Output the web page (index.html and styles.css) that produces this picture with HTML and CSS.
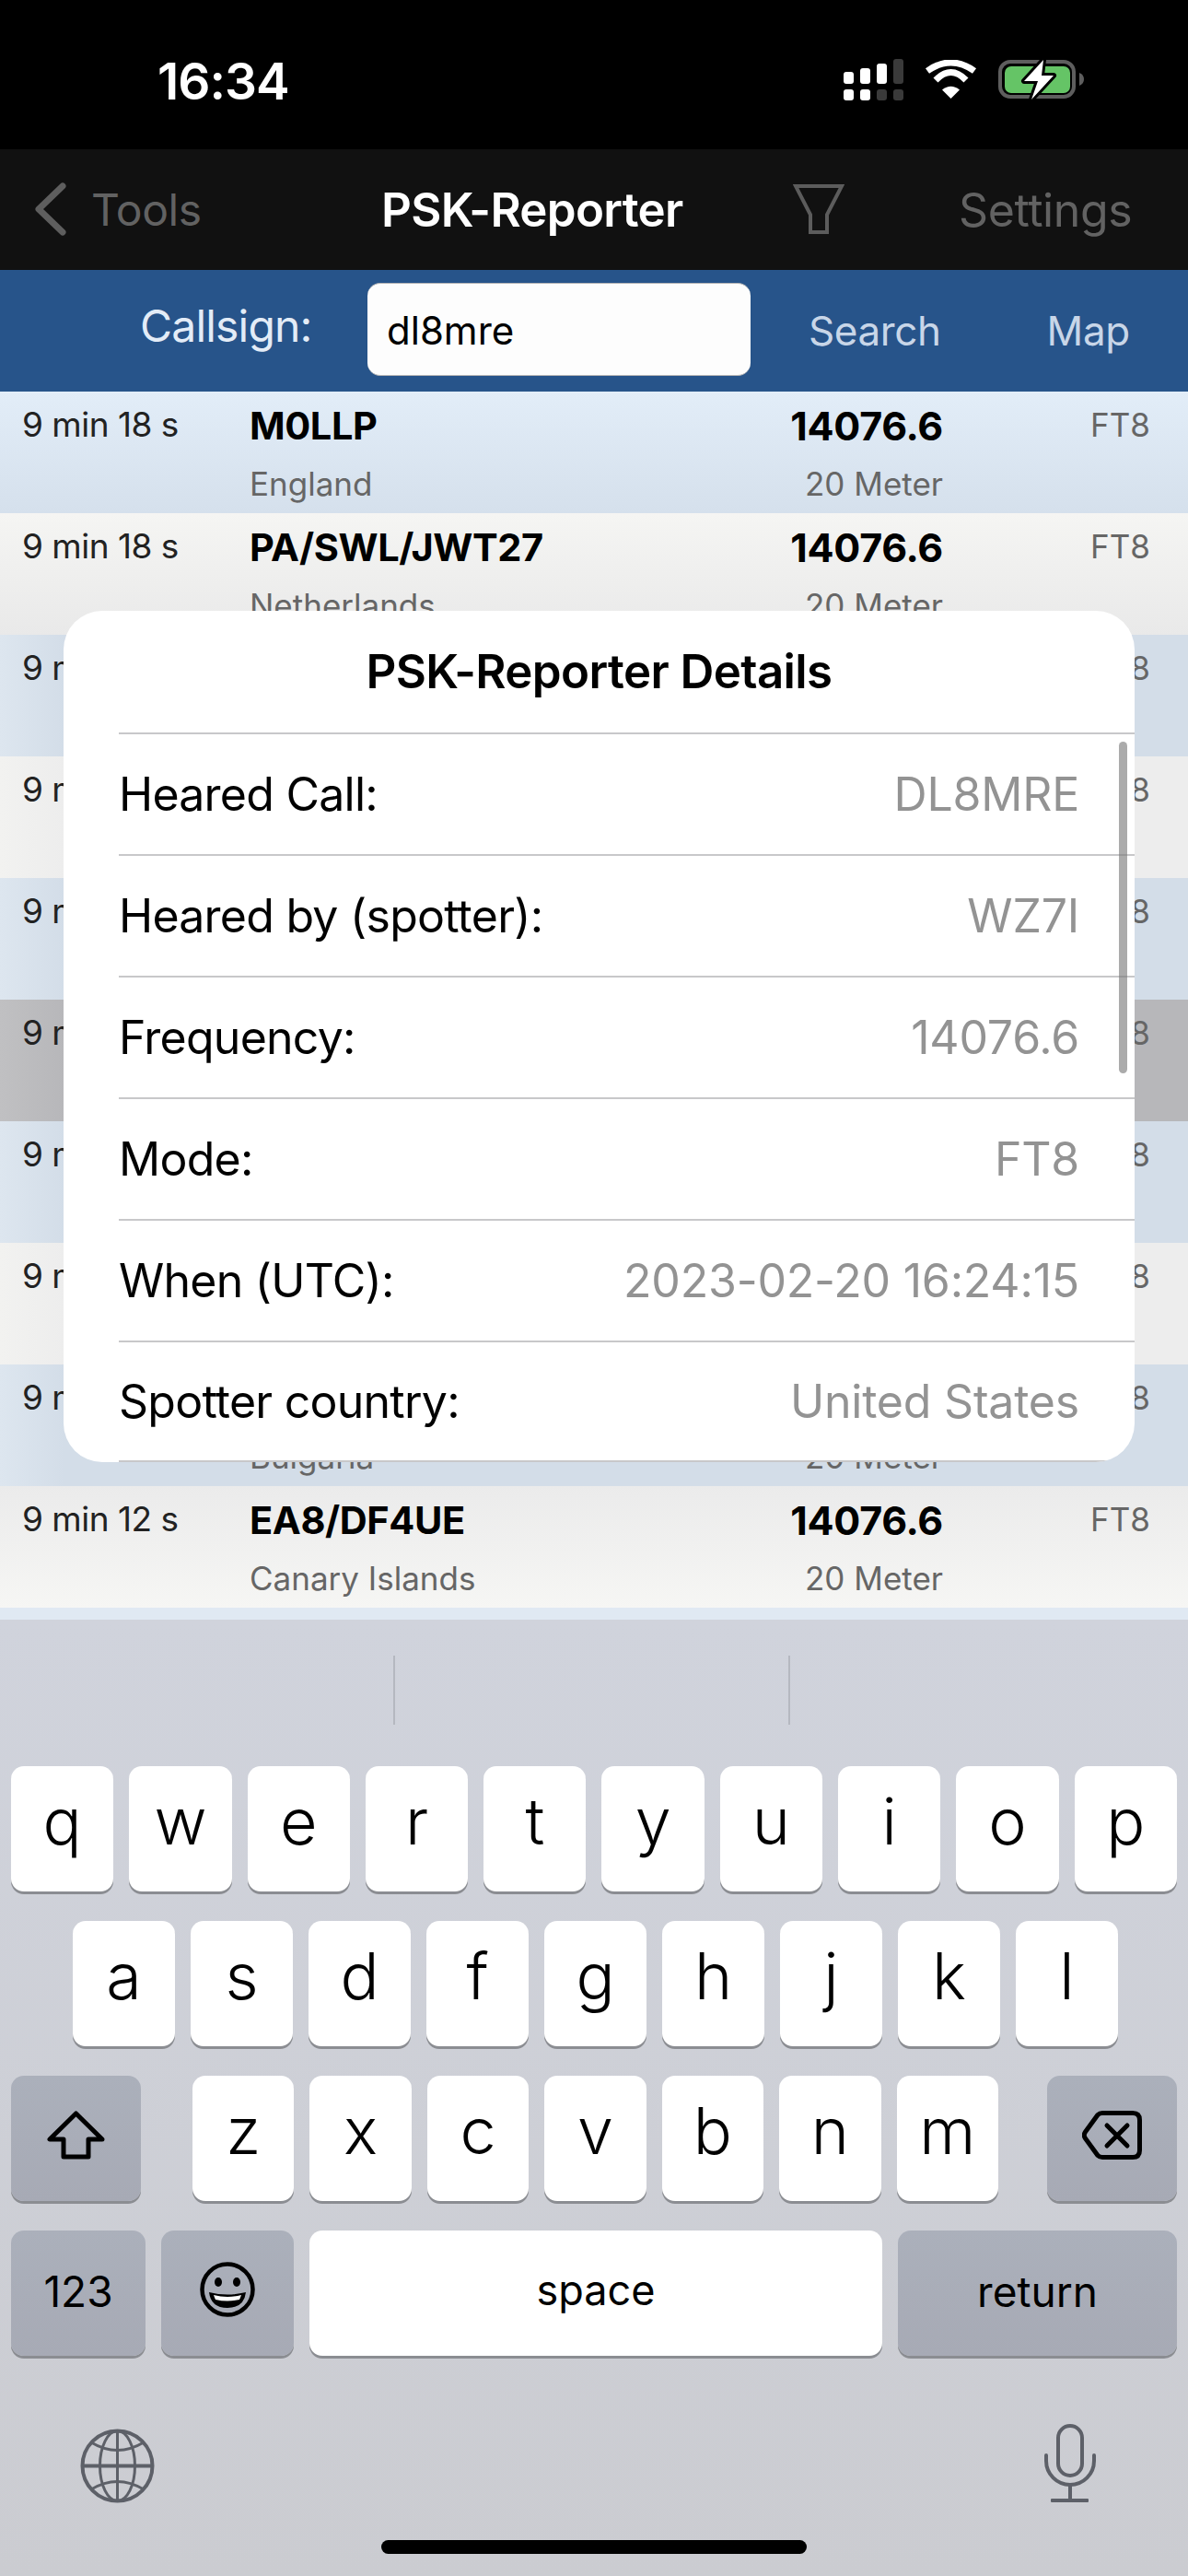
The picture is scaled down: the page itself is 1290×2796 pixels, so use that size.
FILE: index.html
```html
<!DOCTYPE html>
<html lang="en">

<head>
  <meta charset="UTF-8">
  <meta name="viewport" content="width=device-width, initial-scale=1.0">
  <title>PSK-Reporter</title>
  <link rel="stylesheet" href="styles.css">
</head>

<body>
  <div class="status-bar">
    <span class="clock">16:34</span>
    <div class="status-icons">
      <svg class="signal" viewBox="0 0 65 45">
        <rect x="0" y="14" width="11" height="13" rx="3" fill="#fff" />
        <rect x="18" y="10" width="11" height="17" rx="3" fill="#fff" />
        <rect x="36" y="5" width="11" height="22" rx="3" fill="#fff" />
        <rect x="54" y="0" width="11" height="27" rx="3" fill="#3a3a3a" />
        <rect x="0" y="33" width="11" height="12" rx="3" fill="#fff" />
        <rect x="18" y="33" width="11" height="12" rx="3" fill="#fff" />
        <rect x="36" y="33" width="11" height="12" rx="3" fill="#3a3a3a" />
        <rect x="54" y="33" width="11" height="12" rx="3" fill="#3a3a3a" />
      </svg>
      <svg class="wifi" viewBox="0 0 57 42">
        <path d="M3 12 Q28.5 -6 54 12" fill="none" stroke="#fff" stroke-width="7" />
        <path d="M12 22 Q28.5 5 45 22" fill="none" stroke="#fff" stroke-width="7" />
        <path d="M28.5 42 L19 32.5 Q28.5 25 38 32.5 Z" fill="#fff" />
      </svg>
      <svg class="battery" viewBox="0 0 100 50">
        <rect x="6" y="5" width="80" height="38" rx="11" fill="none" stroke="#5e5e5e" stroke-width="4" />
        <rect x="11" y="10" width="71" height="29" rx="7" fill="#65c466" />
        <path d="M92 17 Q97 19 97 24 Q97 29 92 31 Z" fill="#5e5e5e" />
        <path d="M53 3 L32 26 H47 L40 46 L64 20 H51 Z" fill="#fff" stroke="#000" stroke-width="6" paint-order="stroke" stroke-linejoin="round" />
      </svg>
    </div>
  </div>

  <div class="nav-bar">
    <svg class="nav-back" viewBox="0 0 34 58">
      <path d="M30 4 L4 29 L30 54" fill="none" stroke="#5e5e5e" stroke-width="7" stroke-linecap="round" stroke-linejoin="round" />
    </svg>
    <span class="nav-link nav-tools">Tools</span>
    <span class="nav-title">PSK-Reporter</span>
    <svg class="nav-filter" viewBox="0 0 56 55">
      <path d="M3 2 H53 L37 33 V52 H19 V33 Z" fill="none" stroke="#5c5c5c" stroke-width="4" />
    </svg>
    <span class="nav-link nav-settings">Settings</span>
  </div>

  <div class="search-bar">
    <label class="search-label" for="callsign">Callsign:</label>
    <input class="search-input" id="callsign" type="text" value="dl8mre">
    <span class="search-action search-go">Search</span>
    <span class="search-action search-map">Map</span>
  </div>

  <div class="spots">
    <div class="spot spot-first">
      <span class="spot-age">9 min 18 s</span>
      <span class="spot-call">M0LLP</span>
      <span class="spot-freq">14076.6</span>
      <span class="spot-mode">FT8</span>
      <span class="spot-country">England</span>
      <span class="spot-band">20 Meter</span>
    </div>
    <div class="spot spot-second">
      <span class="spot-age">9 min 18 s</span>
      <span class="spot-call">PA/SWL/JWT27</span>
      <span class="spot-freq">14076.6</span>
      <span class="spot-mode">FT8</span>
      <span class="spot-country">Netherlands</span>
      <span class="spot-band">20 Meter</span>
    </div>
    <div class="spot spot-blue">
      <span class="spot-age">9 min</span>
      <span class="spot-mode">FT8</span>
    </div>
    <div class="spot spot-grey">
      <span class="spot-age">9 min</span>
      <span class="spot-mode">FT8</span>
    </div>
    <div class="spot spot-blue">
      <span class="spot-age">9 min</span>
      <span class="spot-mode">FT8</span>
    </div>
    <div class="spot spot-selected">
      <span class="spot-age">9 min</span>
      <span class="spot-mode">FT8</span>
    </div>
    <div class="spot spot-blue">
      <span class="spot-age">9 min</span>
      <span class="spot-mode">FT8</span>
    </div>
    <div class="spot spot-grey">
      <span class="spot-age">9 min</span>
      <span class="spot-mode">FT8</span>
    </div>
    <div class="spot spot-blue">
      <span class="spot-age">9 min</span>
      <span class="spot-mode">FT8</span>
      <span class="spot-country">Bulgaria</span>
      <span class="spot-band">20 Meter</span>
    </div>
    <div class="spot spot-last">
      <span class="spot-age">9 min 12 s</span>
      <span class="spot-call">EA8/DF4UE</span>
      <span class="spot-freq">14076.6</span>
      <span class="spot-mode">FT8</span>
      <span class="spot-country">Canary Islands</span>
      <span class="spot-band">20 Meter</span>
    </div>

    <div class="dialog">
      <div class="dialog-title">PSK-Reporter Details</div>
      <div class="detail-row"><span>Heared Call:</span><span class="detail-value">DL8MRE</span></div>
      <div class="detail-row"><span>Heared by (spotter):</span><span class="detail-value">WZ7I</span></div>
      <div class="detail-row"><span>Frequency:</span><span class="detail-value">14076.6</span></div>
      <div class="detail-row"><span>Mode:</span><span class="detail-value">FT8</span></div>
      <div class="detail-row"><span>When (UTC):</span><span class="detail-value">2023-02-20 16:24:15</span></div>
      <div class="detail-row detail-last"><span>Spotter country:</span><span class="detail-value">United States</span></div>
      <div class="dialog-scroll"></div>
    </div>
  </div>

  <div class="keyboard">
    <div class="suggestions">
      <span class="suggestion-sep"></span>
      <span class="suggestion-sep"></span>
    </div>

    <div class="key-rows">
      <div class="key-row row-top">
        <span class="key">q</span><span class="key">w</span><span class="key">e</span><span class="key">r</span><span class="key">t</span>
        <span class="key">y</span><span class="key">u</span><span class="key">i</span><span class="key">o</span><span class="key">p</span>
      </div>
      <div class="key-row row-middle">
        <span class="key">a</span><span class="key">s</span><span class="key">d</span><span class="key">f</span><span class="key">g</span>
        <span class="key">h</span><span class="key">j</span><span class="key">k</span><span class="key">l</span>
      </div>
      <div class="key-row row-lower">
        <span class="key key-fn key-shift">
          <svg class="key-icon" width="63" height="53" viewBox="0 0 63 53">
            <path d="M31.5 3 L3 31 H18 V50 H45 V31 H60 Z" fill="none" stroke="#000" stroke-width="5" stroke-linejoin="round" />
          </svg>
        </span>
        <div class="letters">
          <span class="key">z</span><span class="key">x</span><span class="key">c</span><span class="key">v</span>
          <span class="key">b</span><span class="key">n</span><span class="key">m</span>
        </div>
        <span class="key key-fn key-delete">
          <svg class="key-icon" width="65" height="53" viewBox="0 0 65 53">
            <path d="M22 2.5 H55 Q62.5 2.5 62.5 10 V43 Q62.5 50.5 55 50.5 H22 Q19 50.5 17 48.5 L3.5 30 Q1 26.5 3.5 23 L17 4.5 Q19 2.5 22 2.5 Z" fill="none" stroke="#000" stroke-width="5" />
            <path d="M27 16 L49 38 M49 16 L27 38" fill="none" stroke="#000" stroke-width="5" stroke-linecap="round" />
          </svg>
        </span>
      </div>
      <div class="key-row row-bottom">
        <span class="key key-fn key-small key-num">123</span>
        <span class="key key-fn key-emoji">
          <svg class="key-icon" width="60" height="60" viewBox="0 0 60 60">
            <circle cx="30" cy="30" r="27.5" fill="none" stroke="#000" stroke-width="4.5" />
            <ellipse cx="20" cy="22" rx="4" ry="5" fill="#000" />
            <ellipse cx="40" cy="22" rx="4" ry="5" fill="#000" />
            <path d="M10 33 Q30 38 50 33 Q48 50 30 50 Q12 50 10 33 Z" fill="#000" />
            <path d="M15 36 Q30 40 45 36 Q44 39 43 41 Q30 44 17 41 Q16 39 15 36 Z" fill="#fff" />
          </svg>
        </span>
        <span class="key key-small key-space">space</span>
        <span class="key key-fn key-small key-return">return</span>
      </div>
    </div>

    <div class="keyboard-tools">
      <svg class="globe" viewBox="0 0 81 81">
        <g fill="none" stroke="#5d6068">
          <circle cx="40.5" cy="40.5" r="38" stroke-width="4" />
          <ellipse cx="40.5" cy="40.5" rx="19" ry="38" stroke-width="3" />
          <path d="M40.5 2 V79" stroke-width="3" />
          <path d="M2 40.5 H79" stroke-width="4" />
          <path d="M12 15 Q40.5 32 69 15 M12 66 Q40.5 49 69 66" stroke-width="3" />
        </g>
      </svg>
      <svg class="mic" viewBox="0 0 56 85">
        <g fill="none" stroke="#5d6068" stroke-width="4">
          <rect x="15" y="2" width="26" height="54" rx="13" />
          <path d="M2 34 V40 A26 26 0 0 0 54 40 V34" stroke-linecap="round" />
          <path d="M28 66 V82" />
        </g>
        <rect x="7" y="81" width="41" height="4" rx="1" fill="#5d6068" />
      </svg>
    </div>

    <div class="home-bar"></div>
  </div>
</body>

</html>
```

FILE: styles.css
```css
* {
  box-sizing: border-box;
}

body {
  margin: 0;
  width: 1290px;
  height: 2796px;
  overflow: hidden;
  font-family: Inter, "Liberation Sans", sans-serif;
  background-color: #000;
}

/* status bar */
.status-bar {
  height: 162px;
  background-color: #000;
  position: relative;
}

.clock {
  position: absolute;
  left: 171px;
  top: 58px;
  font-size: 55px;
  line-height: 60px;
  font-weight: 600;
  color: #fff;
  letter-spacing: -1px;
}

.status-icons {
  display: flex;
  align-items: flex-start;
  padding: 62px 0 0 916px;
}

.signal {
  width: 65px;
  height: 45px;
  margin-top: 2px;
}

.wifi {
  width: 57px;
  height: 42px;
  margin: 3px 0 0 23px;
}

.battery {
  width: 100px;
  height: 50px;
  margin-left: 19px;
}

/* nav bar */
.nav-bar {
  height: 131px;
  background-color: #111;
  display: flex;
  align-items: center;
  padding-left: 38px;
  font-size: 48px;
}

.nav-back {
  width: 34px;
  height: 58px;
  margin-top: -1px;
}

.nav-link {
  color: #626262;
  letter-spacing: -0.4px;
}

.nav-tools {
  margin-left: 27px;
  width: 315px;
}

.nav-title {
  width: 447px;
  font-size: 51px;
  color: #fff;
  font-weight: 600;
  letter-spacing: -0.7px;
}

.nav-filter {
  width: 56px;
  height: 55px;
}

.nav-settings {
  margin-left: 124px;
  font-size: 50px;
}

/* search bar */
.search-bar {
  height: 132px;
  background-color: #27548a;
  display: flex;
  align-items: center;
  padding-left: 152px;
}

.search-label {
  width: 247px;
  font-size: 48px;
  color: #e3ecf7;
  letter-spacing: -0.8px;
  margin-top: -12px;
}

.search-input {
  width: 416px;
  height: 101px;
  padding: 2px 0 0 21px;
  border: none;
  border-top: 1px solid #b5b5b5;
  border-bottom: 1px solid #b5b5b5;
  border-radius: 14px;
  background-color: #fdfdfd;
  font-family: inherit;
  font-size: 42px;
  color: #000;
  margin-top: -4px;
}

.search-action {
  font-size: 44px;
  color: #c8d6e8;
  letter-spacing: -0.4px;
}

.search-go {
  margin-left: 63px;
}

.search-map {
  margin-left: 115px;
}

/* spot list */
.spots {
  height: 1333px;
  background-color: #e0e9f3;
  position: relative;
  overflow: hidden;
}

.spot {
  height: 132px;
  display: grid;
  grid-template-columns: 247px 1fr auto 225px;
  grid-template-rows: 66px 66px;
  padding: 0 41px 0 24px;
  color: #222;
}

.spot-first {
  background: linear-gradient(#e2edf8, #d5e0ec);
}

.spot-second {
  background: linear-gradient(#f5f5f3, #e9e9e9);
}

.spot-blue {
  background: linear-gradient(90deg, #dde6ef, #d3dde8 70px);
}

.spot-grey {
  background: linear-gradient(90deg, #f2f2f0, #ededed 70px);
}

.spot-selected {
  background: linear-gradient(90deg, #c0c0c2, #b7b7ba 70px);
}

.spot-last {
  background: linear-gradient(#ebebeb, #f6f6f4);
}

.spot-age {
  grid-column: 1;
  grid-row: 1;
  font-size: 37px;
  line-height: 42px;
  padding-top: 15px;
  letter-spacing: -0.5px;
}

.spot-call {
  grid-column: 2;
  grid-row: 1;
  font-size: 41.5px;
  line-height: 42px;
  padding-top: 16px;
  font-weight: 700;
  color: #000;
  letter-spacing: -0.4px;
}

.spot-freq {
  grid-column: 3;
  grid-row: 1;
  font-size: 43px;
  line-height: 42px;
  padding-top: 16px;
  font-weight: 700;
  color: #000;
  text-align: right;
  letter-spacing: -0.3px;
}

.spot-mode {
  grid-column: 4;
  grid-row: 1;
  font-size: 35px;
  line-height: 42px;
  padding-top: 15px;
  color: #666;
  text-align: right;
}

.spot-country {
  grid-column: 2;
  grid-row: 2;
  font-size: 35px;
  line-height: 42px;
  padding-top: 13px;
  color: #666;
}

.spot-band {
  grid-column: 3;
  grid-row: 2;
  font-size: 35px;
  line-height: 42px;
  padding-top: 13px;
  color: #666;
  text-align: right;
}

/* details dialog, over the list */
.dialog {
  position: absolute;
  left: 69px;
  top: 238px;
  width: 1163px;
  height: 924px;
  background-color: #fff;
  border-radius: 42px;
  overflow: hidden;
}

.dialog-title {
  height: 132px;
  text-align: center;
  font-size: 51px;
  line-height: 132px;
  font-weight: 600;
  color: #000;
  letter-spacing: -0.6px;
}

.detail-row {
  height: 132px;
  margin-left: 60px;
  padding: 0 60px 0 0;
  border-top: 2px solid #c8c8ca;
  display: flex;
  justify-content: space-between;
  align-items: center;
  font-size: 50px;
  color: #000;
  letter-spacing: -0.75px;
}

.detail-last {
  border-bottom: 2px solid #c8c8ca;
}

.detail-value {
  color: #939393;
  letter-spacing: -0.2px;
}

.dialog-scroll {
  position: absolute;
  left: 1146px;
  top: 142px;
  width: 9px;
  height: 360px;
  border-radius: 5px;
  background-color: rgba(120, 120, 120, 0.62);
}

/* keyboard */
.keyboard {
  height: 1038px;
  background: linear-gradient(#d0d3dc, #cbccd1);
}

.suggestions {
  height: 159px;
  display: flex;
  padding: 39px 0 0 427px;
  gap: 427px;
}

.suggestion-sep {
  width: 2px;
  height: 75px;
  background-color: #b5b8c0;
}

.key-rows {
  display: flex;
  flex-direction: column;
  gap: 32px;
}

.key-row {
  height: 136px;
  display: flex;
  gap: 17px;
  padding: 0 12px;
}

.row-middle {
  padding: 0 76px 0 79px;
}

.letters {
  display: flex;
  flex: 1;
  gap: 17px;
  margin: 0 36px 0 39px;
}

.key {
  flex: 1;
  height: 136px;
  display: flex;
  align-items: center;
  justify-content: center;
  padding-bottom: 18px;
  background-color: #fff;
  border-radius: 14px;
  box-shadow: 0 3px 0 #8b8d92;
  font-size: 70px;
  font-weight: 300;
  color: #000;
}

.key-fn {
  background: linear-gradient(#abb0bb, #a7aab5);
}

.key-shift,
.key-delete {
  flex: 0 0 141px;
  padding-bottom: 8px;
}

.key-num {
  flex: 0 0 146px;
}

.key-emoji {
  flex: 0 0 144px;
  padding-bottom: 8px;
}

.key-space {
  flex: 0 0 622px;
}

.key-return {
  flex: 1;
}

.key-small {
  font-size: 46px;
  font-weight: 400;
  padding-bottom: 4px;
}

.key-space {
  font-size: 45px;
  padding-bottom: 8px;
}

.keyboard-tools {
  display: flex;
  justify-content: space-between;
  align-items: flex-start;
  height: 159px;
  padding: 74px 100px 0 87px;
}

.globe {
  width: 81px;
  height: 81px;
  margin-top: 5px;
}

.mic {
  width: 56px;
  height: 85px;
}

.home-bar {
  width: 462px;
  height: 15px;
  margin: 41px auto 0;
  border-radius: 8px;
  background-color: #000;
}
```
